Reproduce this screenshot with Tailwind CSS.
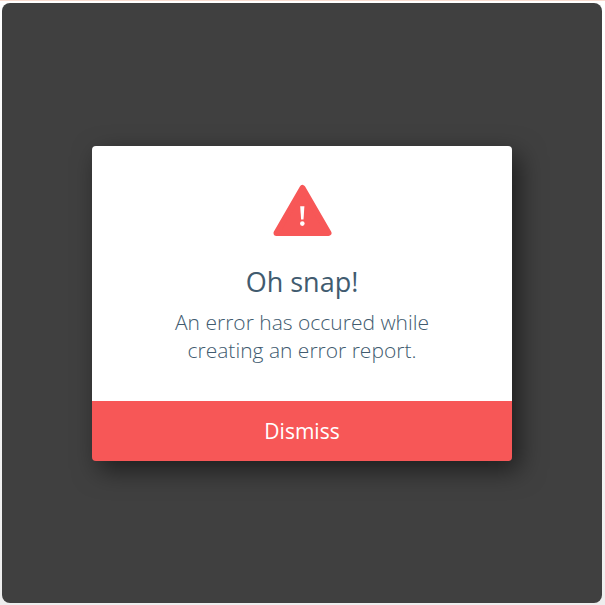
<!DOCTYPE html>
<html lang="en"><head><meta charset="utf-8"><title>Error</title><script src="https://cdn.jsdelivr.net/npm/@tailwindcss/browser@4"></script></head>
<body class="h-[605px] w-[605px] overflow-hidden font-['Open_Sans',sans-serif]">
<div class="h-full border-t border-[#f9dcd0] bg-linear-to-b from-white to-[#eeeeee] pt-[2px] pl-[2px]">
<main class="flex h-[600px] w-[600px] justify-center rounded-lg bg-[#404040] pt-[143px]">
<section class="flex h-[315px] w-[420px] flex-col rounded shadow-[7px_9px_26px_rgba(0,0,0,0.55)]">
<div class="flex h-[255px] flex-col items-center rounded-t bg-white pt-[38px] text-center text-[#415b6f]">
<svg class="h-[53px] w-[60px]" viewBox="0 0 60 53"><path d="M30.500 4L56.500 49H4.500Z" fill="#f75757" stroke="#f75757" stroke-width="6" stroke-linejoin="round"/><path d="M28.200 22.300h4.200l-.9 13.200h-2.400z" fill="#fff"/><circle cx="30.300" cy="39.600" r="2.300" fill="#fff"/></svg>
<h1 class="mt-[27px] text-[27px] leading-[36px]">Oh snap!</h1>
<p class="mt-[8px] text-[21px] leading-[28px] font-light">An error has occured while<br>creating an error report.</p>
</div>
<button class="h-[60px] rounded-b bg-[#f75757] pt-[2px] text-[21px] text-white">Dismiss</button>
</section></main></div></body></html>
